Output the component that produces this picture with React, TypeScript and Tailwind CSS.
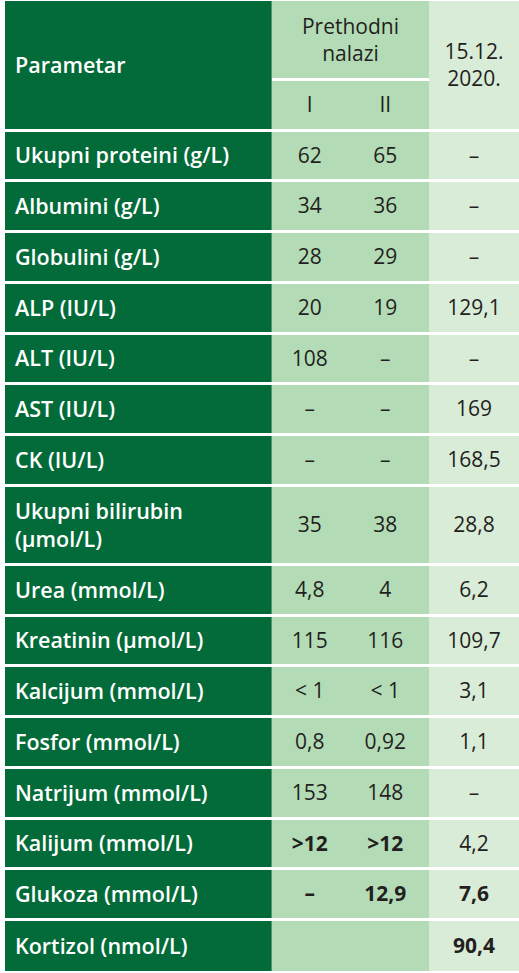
const rows: { label: string[]; a: string; b: string; c: string; bold?: [boolean, boolean, boolean]; tall?: boolean }[] = [
  { label: ['Ukupni proteini (g/L)'], a: '62', b: '65', c: '–' },
  { label: ['Albumini (g/L)'], a: '34', b: '36', c: '–' },
  { label: ['Globulini (g/L)'], a: '28', b: '29', c: '–' },
  { label: ['ALP (IU/L)'], a: '20', b: '19', c: '129,1' },
  { label: ['ALT (IU/L)'], a: '108', b: '–', c: '–' },
  { label: ['AST (IU/L)'], a: '–', b: '–', c: '169' },
  { label: ['CK (IU/L)'], a: '–', b: '–', c: '168,5' },
  { label: ['Ukupni bilirubin', '(µmol/L)'], a: '35', b: '38', c: '28,8', tall: true },
  { label: ['Urea (mmol/L)'], a: '4,8', b: '4', c: '6,2' },
  { label: ['Kreatinin (µmol/L)'], a: '115', b: '116', c: '109,7' },
  { label: ['Kalcijum (mmol/L)'], a: '< 1', b: '< 1', c: '3,1' },
  { label: ['Fosfor (mmol/L)'], a: '0,8', b: '0,92', c: '1,1' },
  { label: ['Natrijum (mmol/L)'], a: '153', b: '148', c: '–' },
  { label: ['Kalijum (mmol/L)'], a: '>12', b: '>12', c: '4,2', bold: [true, true, false] },
  { label: ['Glukoza (mmol/L)'], a: '–', b: '12,9', c: '7,6', bold: [true, true, true] },
  { label: ['Kortizol (nmol/L)'], a: '', b: '', c: '90,4', bold: [false, false, true] },
]

function Val({ v, bold }: { v: string; bold?: boolean }) {
  return <div className={`flex h-full items-center justify-center ${bold ? 'font-bold' : 'font-normal'}`}>{v}</div>
}

export default function App() {
  return (
    <div className="min-h-screen bg-white pl-[5px] pt-px text-[21px] text-[#231f20]" style={{ fontFamily: '"Open Sans", "Noto Sans", sans-serif' }}>
      <div className="flex flex-col gap-[3px]">
        <div className="grid h-[127.5px] grid-cols-[266px_158px_1fr]">
          <div className="flex items-center bg-[#036b39] pl-[10px] text-[21.5px] font-semibold text-white">Parametar</div>
          <div className="flex flex-col gap-[3px] border-l border-[#4f9a6b] bg-white">
            <div className="flex h-[77px] items-center justify-center bg-[#b3dcb6] text-center leading-[27px]">
              Prethodni
              <br />
              nalazi
            </div>
            <div className="grid flex-1 grid-cols-2 bg-[#b3dcb6] pr-[6px]">
              <Val v="I" />
              <Val v="II" />
            </div>
          </div>
          <div className="flex items-center justify-center bg-[#d9ecd8] text-center leading-[27px]">
            15.12.
            <br />
            2020.
          </div>
        </div>
        {rows.map((r, i) => (
          <div
            key={r.label.join(' ')}
            className={`grid grid-cols-[266px_158px_1fr] ${r.tall ? 'h-[76px]' : i === rows.length - 1 ? 'h-[50px]' : 'h-[47.75px]'}`}
          >
            <div className="flex flex-col justify-center bg-[#036b39] pl-[10px] text-[21.5px] font-semibold leading-[28px] text-white">
              {r.label.map((l) => (
                <span key={l}>{l}</span>
              ))}
            </div>
            <div className="grid grid-cols-2 border-l border-[#4f9a6b] bg-[#b3dcb6] pr-[6px]">
              <Val v={r.a} bold={r.bold?.[0]} />
              <Val v={r.b} bold={r.bold?.[1]} />
            </div>
            <div className="bg-[#d9ecd8]">
              <Val v={r.c} bold={r.bold?.[2]} />
            </div>
          </div>
        ))}
      </div>
    </div>
  )
}
